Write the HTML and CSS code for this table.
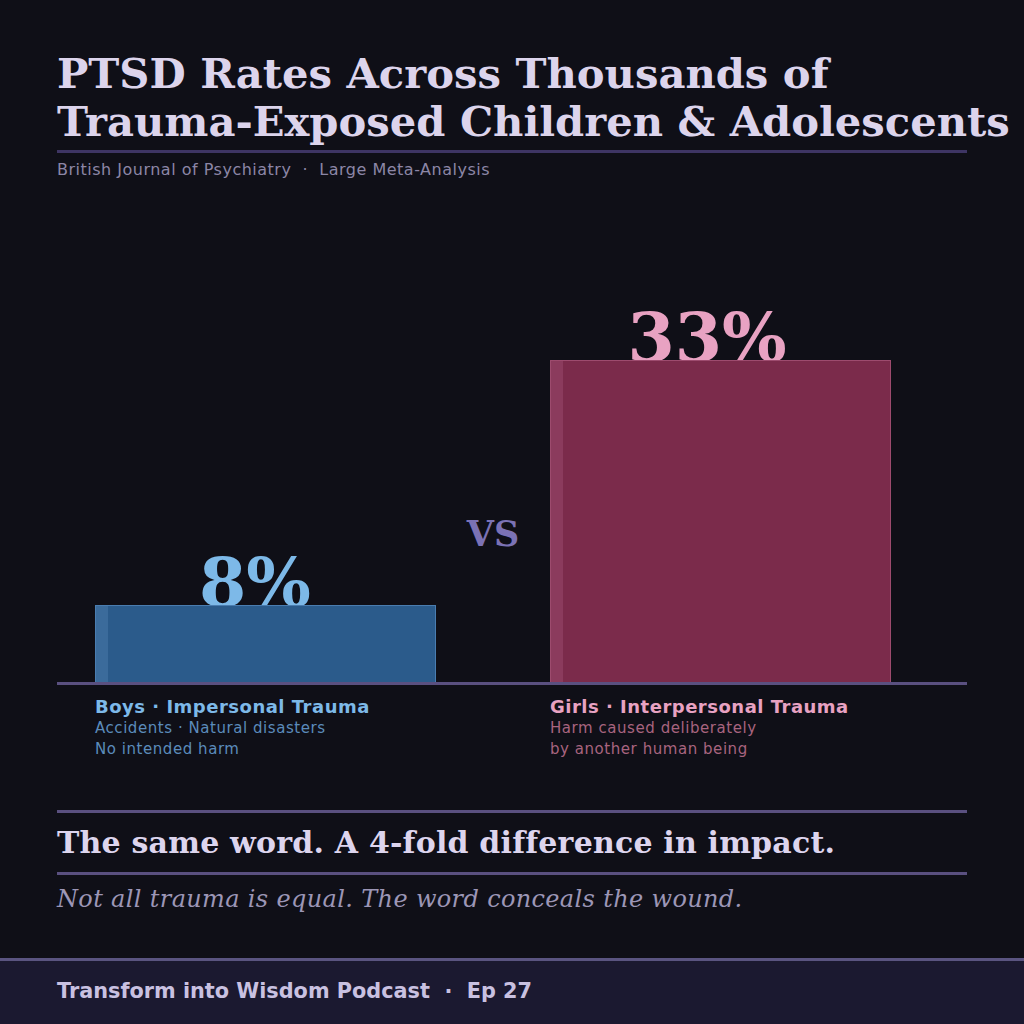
FILE: index.html
```html
<!DOCTYPE html>
<html lang="en">
<head>
<meta charset="utf-8">
<title>PTSD Rates</title>
<link rel="stylesheet" href="styles.css">
</head>
<body>
<div class="page">
  <main class="main">
    <h1 class="title">PTSD Rates Across Thousands of<br>Trauma-Exposed Children &amp; Adolescents</h1>
    <p class="source">British Journal of Psychiatry &nbsp;·&nbsp; Large Meta-Analysis</p>

    <section class="chart">
      <div class="plot">
        <div class="col">
          <div class="value value-blue">8%</div>
          <div class="bar bar-blue" style="height: 77px"></div>
        </div>
        <div class="vs">VS</div>
        <div class="col">
          <div class="value value-pink">33%</div>
          <div class="bar bar-pink" style="height: 322px"></div>
        </div>
      </div>
      <div class="labels">
        <div class="label label-blue">
          <div class="label-title">Boys · Impersonal Trauma</div>
          <div class="label-sub">Accidents · Natural disasters</div>
          <div class="label-sub">No intended harm</div>
        </div>
        <div class="label label-pink">
          <div class="label-title">Girls · Interpersonal Trauma</div>
          <div class="label-sub">Harm caused deliberately</div>
          <div class="label-sub">by another human being</div>
        </div>
      </div>
    </section>

    <h2 class="headline">The same word. A 4-fold difference in impact.</h2>
    <p class="tagline">Not all trauma is equal. The word conceals the wound.</p>
  </main>
  <footer class="footer">Transform into Wisdom Podcast &nbsp;·&nbsp; Ep 27</footer>
</div>
</body>
</html>
```
FILE: styles.css
```css
* { box-sizing: border-box; }

html, body {
  margin: 0;
  padding: 0;
  background: #0f0f17;
}

.page {
  width: 1024px;
  height: 1024px;
  display: flex;
  flex-direction: column;
  overflow: hidden;
  font-family: "DejaVu Sans", sans-serif;
}

.main {
  flex: 1;
  padding: 50px 57px 0 57px;
  display: flex;
  flex-direction: column;
}

.title {
  margin: 0;
  font-family: "DejaVu Serif", serif;
  font-weight: bold;
  font-size: 41.7px;
  line-height: 48px;
  color: #dcd4ec;
  white-space: nowrap;
  padding-bottom: 4px;
  border-bottom: 3px solid #3e3564;
}

.source {
  margin: 7px 0 0 0;
  font-size: 16px;
  letter-spacing: 0.5px;
  line-height: 20px;
  color: #8c86a6;
}

.chart {
  display: flex;
  flex-direction: column;
}

.plot {
  height: 505px;
  display: flex;
  align-items: flex-end;
  padding-left: 38px;
  border-bottom: 3px solid #5a5080;
}

.col {
  width: 341px;
  display: flex;
  flex-direction: column;
  align-items: stretch;
}

.value {
  font-family: "DejaVu Serif", serif;
  font-weight: bold;
  font-size: 68px;
  line-height: 56px;
  text-align: center;
  margin-bottom: -5px;
}

.value-blue { color: #7db9e8; padding-right: 21px; }
.value-pink { color: #e8a2c2; padding-right: 27px; }

.bar-blue {
  background: linear-gradient(to right, #3b6b9b 0, #3b6b9b 12px, #2b5b8b 12px);
  border: 1px solid #4a7db0;
  border-bottom: none;
}

.bar-pink {
  background: linear-gradient(to right, #8b3b5d 0, #8b3b5d 12px, #7b2b4b 12px);
  border: 1px solid #9d4b6e;
  border-bottom: none;
}

.vs {
  width: 114px;
  text-align: center;
  font-family: "DejaVu Serif", serif;
  font-weight: bold;
  font-size: 35px;
  line-height: 40px;
  color: #7b72b5;
  margin-bottom: 128px;
}

.labels {
  display: flex;
  padding-left: 38px;
  margin-top: 11px;
  gap: 114px;
}

.label {
  width: 341px;
}

.label-title {
  font-weight: bold;
  font-size: 18px;
  letter-spacing: 0.5px;
  line-height: 21px;
}

.label-sub {
  font-size: 15px;
  letter-spacing: 0.55px;
  line-height: 21px;
  position: relative;
  top: 1px;
}

.label-blue .label-title { color: #7db9e8; }
.label-blue .label-sub { color: #5b8bbb; }
.label-pink .label-title { color: #e8a2c2; }
.label-pink .label-sub { color: #a8647f; }

.headline {
  margin: 51px 0 0 0;
  padding: 11px 0 11px 0;
  border-top: 3px solid #5a5080;
  border-bottom: 3px solid #5a5080;
  font-family: "DejaVu Serif", serif;
  font-weight: bold;
  font-size: 30px;
  letter-spacing: 0.2px;
  line-height: 37px;
  color: #ddd5ee;
}

.tagline {
  margin: 9px 0 0 0;
  font-family: "DejaVu Serif", serif;
  font-style: italic;
  font-size: 24px;
  letter-spacing: 0.35px;
  line-height: 30px;
  color: #9c96b6;
}

.footer {
  height: 66px;
  flex: none;
  background: #1b1930;
  border-top: 3px solid #5a5480;
  padding: 18px 57px 0 57px;
  font-weight: bold;
  font-size: 20.8px;
  line-height: 24px;
  color: #c9c1e1;
}
```
